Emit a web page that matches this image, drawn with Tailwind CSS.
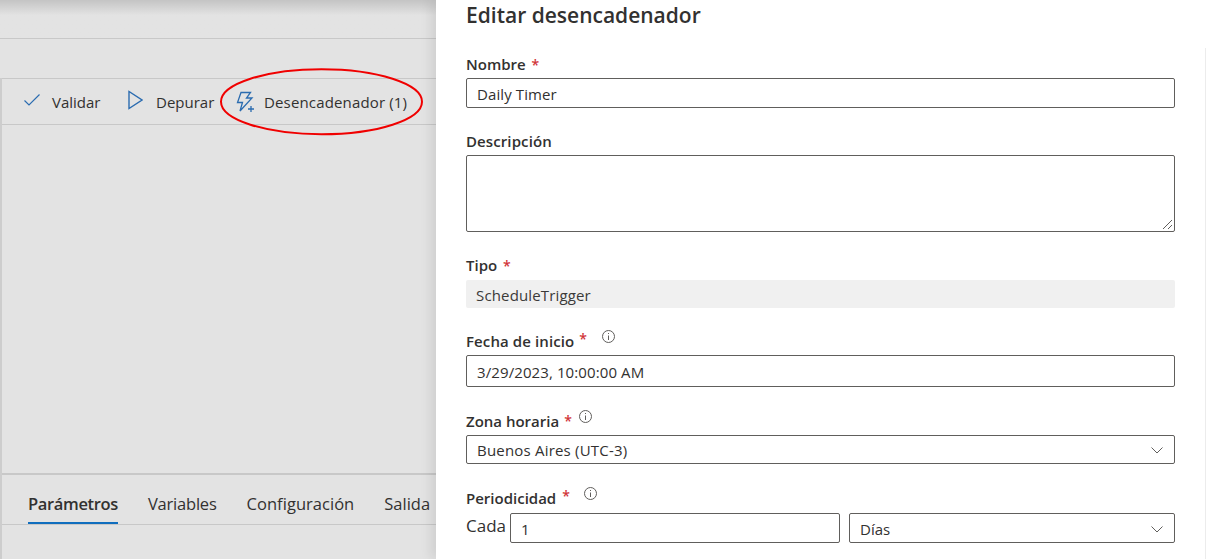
<!DOCTYPE html>
<html lang="es">
<head>
  <meta charset="UTF-8" />
  <title>Editar desencadenador</title>
  <script src="https://cdn.jsdelivr.net/npm/@tailwindcss/browser@4"></script>
</head>
<body class="bg-white overflow-hidden font-['Open_Sans',sans-serif] text-[#323130]">
  <div class="relative flex w-[1206px] h-[559px] overflow-hidden">

    <!-- left: pipeline canvas, dimmed -->
    <div class="w-[436px] h-full shrink-0 flex flex-col bg-[#e3e3e3]">
      <div class="h-[39px] shrink-0 border-b border-[#c8c8c8] bg-gradient-to-b from-[#c4c4c4] via-[#e3e3e3] via-40% to-[#e3e3e3]"></div>
      <div class="h-[39px] shrink-0"></div>
      <div class="flex-1 flex flex-col border-l-2 border-[#cdcdcd] min-h-0">
        <div class="h-[47px] shrink-0 flex items-center border-y border-[#c8c8c8] pl-[22px] text-[15px]">
          <svg class="w-[16px] h-[12px] mr-[12px] mb-[4px]" viewBox="0 0 16 12" fill="none" stroke="#2b6cb0" stroke-width="1.2"><path d="M0.5 6.5 L5 11 L15.5 0.5"/></svg>
          <span class="w-[48px] mt-[2px]">Validar</span>
          <svg class="w-[15px] h-[20px] ml-[28px] mr-[13px] mb-[3px]" viewBox="0 0 15 20" fill="none" stroke="#2b6cb0" stroke-width="1.4"><path d="M1 1.5 L1 18.5 L14 10 Z"/></svg>
          <span class="w-[58px] mt-[2px]">Depurar</span>
          <svg class="w-[20px] h-[22px] ml-[22px] mr-[8px]" viewBox="0 0 20 22" fill="none" stroke="#2b6cb0" stroke-width="1.3"><path d="M5 1.5 H14.5 L10.5 7 H16 L4 20 L6.5 11.5 H1.5 Z"/><path d="M12 18 H18 M15 15 V21"/></svg>
          <span class="whitespace-nowrap mt-[2px] tracking-[0.15px]">Desencadenador (1)</span>
        </div>
        <div class="flex-1"></div>
        <div class="h-[51px] shrink-0 flex items-end gap-[30px] border-t-2 border-[#c8c8c8] pl-[26px] text-[16.5px]">
          <span class="h-[48px] pt-[16px] border-b-2 border-[#106ebe] font-semibold tracking-[-0.35px]">Parámetros</span>
          <span class="h-[48px] pt-[16px] tracking-[-0.2px]">Variables</span>
          <span class="h-[48px] pt-[16px] tracking-[0.03px]">Configuración</span>
          <span class="h-[48px] pt-[16px]">Salida</span>
        </div>
        <div class="h-[35px] shrink-0 border-t border-[#c8c8c8]"></div>
      </div>
    </div>

    <!-- right: trigger edit panel -->
    <div class="relative flex-1 pl-[30px] shadow-[-6px_0_10px_rgba(0,0,0,0.08)] bg-white">
      <h1 class="h-[30px] text-[21px] leading-[30px] font-semibold">Editar desencadenador</h1>

      <div class="w-[709px] text-[15px]">
        <label class="block mt-[24px] h-[20px] leading-[20px] font-semibold">Nombre <span class="text-[14px] text-[#d13438] ml-[2px]">*</span></label>
        <div class="mt-[4px] h-[30px] flex items-center pl-[10px] pt-[2px] border border-[#605e5c] rounded-[2px] tracking-[0.1px]">Daily Timer</div>

        <label class="block mt-[23px] h-[20px] leading-[20px] font-semibold tracking-[0.1px]">Descripción</label>
        <div class="relative mt-[4px] h-[77px] border border-[#605e5c] rounded-[2px]">
          <svg class="absolute right-[1px] bottom-[1px] w-[11px] h-[11px]" viewBox="0 0 11 11" stroke="#605e5c" fill="none"><path d="M1 10 L10 1 M6 10 L10 6"/></svg>
        </div>

        <label class="block mt-[23px] h-[21px] leading-[20px] font-semibold">Tipo <span class="text-[14px] text-[#d13438] ml-[2px]">*</span></label>
        <div class="mt-[4px] h-[28px] flex items-center pl-[10px] pt-[2px] bg-[#f0f0f0] rounded-[2px] text-[#3b3a39] tracking-[0.15px]">ScheduleTrigger</div>

        <label class="flex items-start mt-[23px] h-[20px] leading-[20px] font-semibold tracking-[0.1px]">Fecha de inicio <span class="text-[14px] text-[#d13438] ml-[5px] -mt-[2px]">*</span>
          <svg class="ml-[14px] -mt-[2px] w-[15px] h-[15px]" viewBox="0 0 15 15" fill="none" stroke="#605e5c"><circle cx="7.5" cy="7.5" r="6"/><path d="M7.5 6.5 V11 M7.5 4 V5"/></svg>
        </label>
        <div class="mt-[4px] h-[32px] flex items-center pl-[10px] pt-[2px] border border-[#605e5c] rounded-[2px] tracking-[0.1px]">3/29/2023, 10:00:00 AM</div>

        <label class="flex items-start mt-[24px] h-[20px] leading-[20px] font-semibold">Zona horaria <span class="text-[14px] text-[#d13438] ml-[5px]">*</span>
          <svg class="ml-[6px] -mt-[2px] w-[15px] h-[15px]" viewBox="0 0 15 15" fill="none" stroke="#605e5c"><circle cx="7.5" cy="7.5" r="6"/><path d="M7.5 6.5 V11 M7.5 4 V5"/></svg>
        </label>
        <div class="mt-[4px] h-[29px] flex items-center justify-between pl-[10px] pr-[11px] pt-[2px] border border-[#605e5c] rounded-[2px] tracking-[0.2px]">
          Buenos Aires (UTC-3)
          <svg class="w-[12px] h-[7px]" viewBox="0 0 12 7" fill="none" stroke="#605e5c"><path d="M0.5 0.5 L6 6 L11.5 0.5"/></svg>
        </div>

        <label class="flex items-start mt-[24px] h-[20px] leading-[20px] font-semibold">Periodicidad <span class="text-[14px] text-[#d13438] ml-[6px] -mt-[2px]">*</span>
          <svg class="ml-[13px] -mt-[2px] w-[15px] h-[15px]" viewBox="0 0 15 15" fill="none" stroke="#605e5c"><circle cx="7.5" cy="7.5" r="6"/><path d="M7.5 6.5 V11 M7.5 4 V5"/></svg>
        </label>
        <div class="mt-[5px] flex items-start">
          <span class="w-[44px] text-[17px] leading-[26px]">Cada</span>
          <div class="w-[330px] h-[30px] flex items-center pl-[10px] pt-[2px] border border-[#605e5c] rounded-[2px]">1</div>
          <div class="ml-[9px] flex-1 h-[30px] flex items-center justify-between pl-[10px] pr-[11px] pt-[2px] border border-[#605e5c] rounded-[2px]">
            Días
            <svg class="w-[12px] h-[7px]" viewBox="0 0 12 7" fill="none" stroke="#605e5c"><path d="M0.5 0.5 L6 6 L11.5 0.5"/></svg>
          </div>
        </div>
      </div>

      <!-- scrollbar edge -->
      <div class="absolute right-0 top-[48px] bottom-0 w-px bg-[#ececec]"></div>
    </div>

    <!-- red ellipse annotation -->
    <svg class="absolute left-[219px] top-[67px] w-[206px] h-[70px]" viewBox="0 0 206 70" fill="none">
      <ellipse cx="102.5" cy="34.7" rx="100.5" ry="32.5" stroke="#f00000" stroke-width="2"/>
    </svg>
  </div>
</body>
</html>
